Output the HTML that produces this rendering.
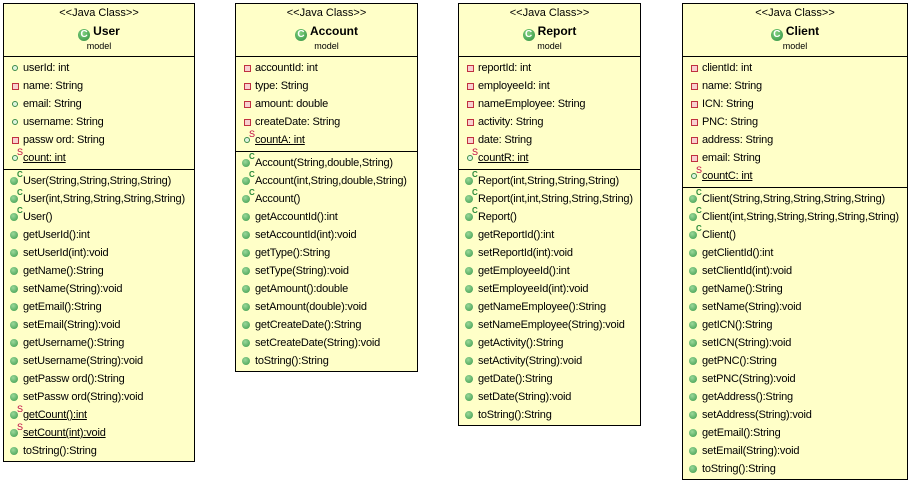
<!DOCTYPE html>
<html><head><meta charset="utf-8"><style>
body{margin:0;width:911px;height:483px;background:#fff;position:relative;font-family:"Liberation Sans",Arial,sans-serif;font-size:11px;color:#000;overflow:hidden}
.b{position:absolute;top:3px;border:1px solid #000;background:#ffffc8;box-sizing:border-box}
.h{height:52px;border-bottom:1px solid #000;text-align:center;position:relative}
.h .st1{position:absolute;top:3px;left:0;right:0;font-size:11px}
.h .nm{position:absolute;top:20px;left:0;right:0;font-size:12px;font-weight:bold}
.h .pk{position:absolute;top:37px;left:0;right:0;font-size:9px}
.g{display:inline-block;width:12px;height:12px;border-radius:50%;background:radial-gradient(circle at 40% 35%,#7fd07f,#2f8f3f);color:#fff;font-size:10px;line-height:12px;font-weight:bold;vertical-align:-2px;margin-right:3px;text-align:center}
.s{padding:2px 0;border-bottom:1px solid #000}
.s:last-child{border-bottom:none}
.r{height:18px;line-height:18px;padding-left:19px;position:relative;white-space:nowrap;letter-spacing:-0.2px}
.r::before{content:"";position:absolute}
.pf::before{left:8px;top:6px;width:4px;height:4px;border:1px solid #3a8a4a;border-radius:50%;background:#dff5df}
.pv::before{left:8px;top:6px;width:5px;height:5px;border:1px solid #c03040;background:#f8d0d0}
.m::before{left:6px;top:5px;width:8px;height:8px;border-radius:50%;background:radial-gradient(circle at 40% 35%,#9ad89a,#3a9a4a)}
.c::after{content:"C";position:absolute;left:13px;top:-6px;font-size:8px;color:#2a8a3a;font-weight:bold}
.x::after{content:"S";position:absolute;left:13px;top:-6px;font-size:9px;color:#c00040}
.u span{text-decoration:underline}
</style></head><body>

<div class="b" style="left:3px;width:192px;height:459px">
<div class="h"><div class="st1">&lt;&lt;Java Class&gt;&gt;</div><div class="nm"><span class="g">C</span>User</div><div class="pk">model</div></div>
<div class="s">
<div class="r pf">userId: int</div>
<div class="r pv">name: String</div>
<div class="r pf">email: String</div>
<div class="r pf">username: String</div>
<div class="r pv">passw ord: String</div>
<div class="r pf x u"><span>count: int</span></div>
</div>
<div class="s">
<div class="r m c">User(String,String,String,String)</div>
<div class="r m c">User(int,String,String,String,String)</div>
<div class="r m c">User()</div>
<div class="r m">getUserId():int</div>
<div class="r m">setUserId(int):void</div>
<div class="r m">getName():String</div>
<div class="r m">setName(String):void</div>
<div class="r m">getEmail():String</div>
<div class="r m">setEmail(String):void</div>
<div class="r m">getUsername():String</div>
<div class="r m">setUsername(String):void</div>
<div class="r m">getPassw ord():String</div>
<div class="r m">setPassw ord(String):void</div>
<div class="r m x u"><span>getCount():int</span></div>
<div class="r m x u"><span>setCount(int):void</span></div>
<div class="r m">toString():String</div>
</div></div>

<div class="b" style="left:235px;width:183px;height:369px">
<div class="h"><div class="st1">&lt;&lt;Java Class&gt;&gt;</div><div class="nm"><span class="g">C</span>Account</div><div class="pk">model</div></div>
<div class="s">
<div class="r pv">accountId: int</div>
<div class="r pv">type: String</div>
<div class="r pv">amount: double</div>
<div class="r pv">createDate: String</div>
<div class="r pf x u"><span>countA: int</span></div>
</div>
<div class="s">
<div class="r m c">Account(String,double,String)</div>
<div class="r m c">Account(int,String,double,String)</div>
<div class="r m c">Account()</div>
<div class="r m">getAccountId():int</div>
<div class="r m">setAccountId(int):void</div>
<div class="r m">getType():String</div>
<div class="r m">setType(String):void</div>
<div class="r m">getAmount():double</div>
<div class="r m">setAmount(double):void</div>
<div class="r m">getCreateDate():String</div>
<div class="r m">setCreateDate(String):void</div>
<div class="r m">toString():String</div>
</div></div>

<div class="b" style="left:458px;width:183px;height:423px">
<div class="h"><div class="st1">&lt;&lt;Java Class&gt;&gt;</div><div class="nm"><span class="g">C</span>Report</div><div class="pk">model</div></div>
<div class="s">
<div class="r pv">reportId: int</div>
<div class="r pv">employeeId: int</div>
<div class="r pv">nameEmployee: String</div>
<div class="r pv">activity: String</div>
<div class="r pv">date: String</div>
<div class="r pf x u"><span>countR: int</span></div>
</div>
<div class="s">
<div class="r m c">Report(int,String,String,String)</div>
<div class="r m c">Report(int,int,String,String,String)</div>
<div class="r m c">Report()</div>
<div class="r m">getReportId():int</div>
<div class="r m">setReportId(int):void</div>
<div class="r m">getEmployeeId():int</div>
<div class="r m">setEmployeeId(int):void</div>
<div class="r m">getNameEmployee():String</div>
<div class="r m">setNameEmployee(String):void</div>
<div class="r m">getActivity():String</div>
<div class="r m">setActivity(String):void</div>
<div class="r m">getDate():String</div>
<div class="r m">setDate(String):void</div>
<div class="r m">toString():String</div>
</div></div>

<div class="b" style="left:682px;width:226px;height:477px">
<div class="h"><div class="st1">&lt;&lt;Java Class&gt;&gt;</div><div class="nm"><span class="g">C</span>Client</div><div class="pk">model</div></div>
<div class="s">
<div class="r pv">clientId: int</div>
<div class="r pv">name: String</div>
<div class="r pv">ICN: String</div>
<div class="r pv">PNC: String</div>
<div class="r pv">address: String</div>
<div class="r pv">email: String</div>
<div class="r pf x u"><span>countC: int</span></div>
</div>
<div class="s">
<div class="r m c">Client(String,String,String,String,String)</div>
<div class="r m c">Client(int,String,String,String,String,String)</div>
<div class="r m c">Client()</div>
<div class="r m">getClientId():int</div>
<div class="r m">setClientId(int):void</div>
<div class="r m">getName():String</div>
<div class="r m">setName(String):void</div>
<div class="r m">getICN():String</div>
<div class="r m">setICN(String):void</div>
<div class="r m">getPNC():String</div>
<div class="r m">setPNC(String):void</div>
<div class="r m">getAddress():String</div>
<div class="r m">setAddress(String):void</div>
<div class="r m">getEmail():String</div>
<div class="r m">setEmail(String):void</div>
<div class="r m">toString():String</div>
</div></div>

</body></html>
